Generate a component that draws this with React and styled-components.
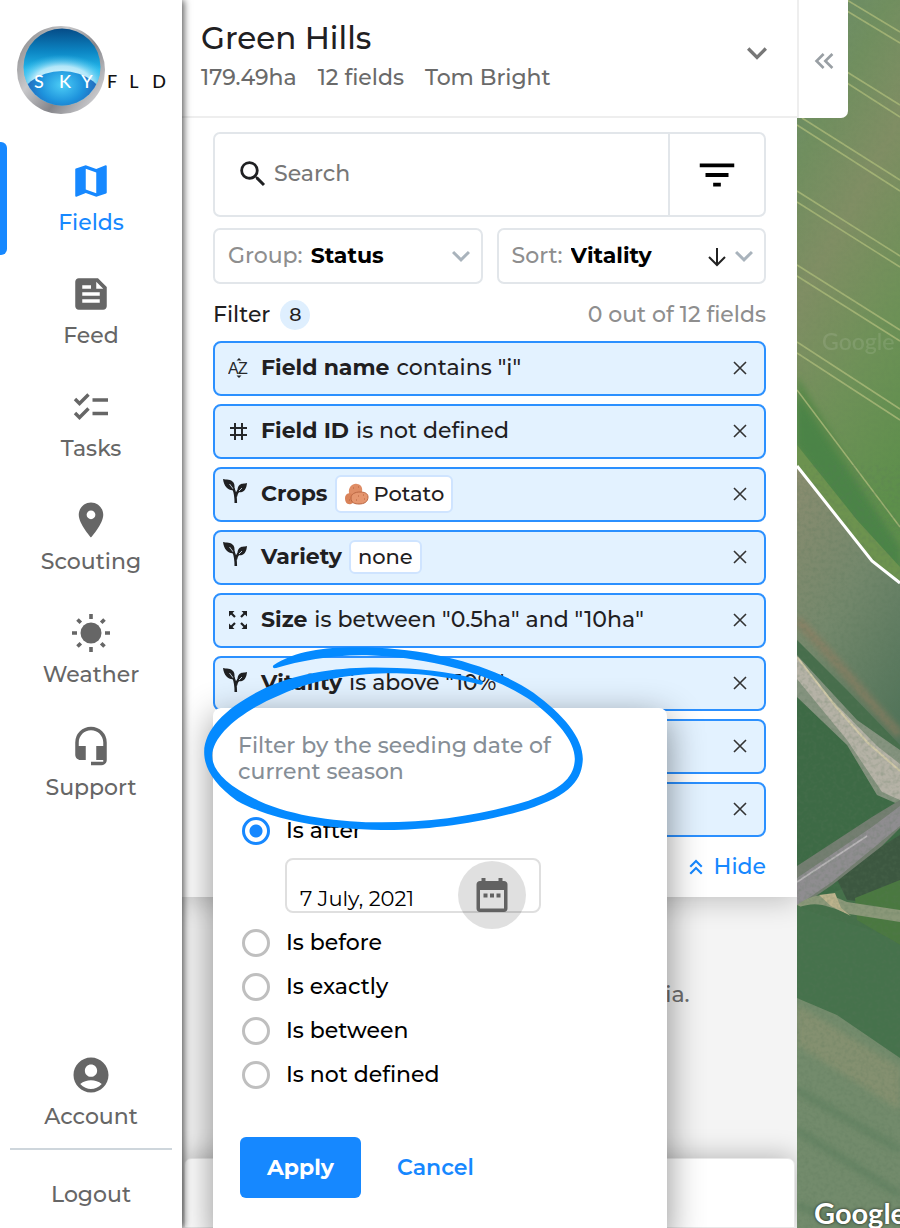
import React, { useState } from 'react';
import styled, { createGlobalStyle } from 'styled-components';
import {
  MdMap,
  MdFeed,
  MdPlace,
  MdHeadsetMic,
  MdAccountCircle,
  MdSearch,
  MdFilterList,
  MdExpandMore,
  MdKeyboardDoubleArrowLeft,
  MdKeyboardDoubleArrowUp,
} from 'react-icons/md';

const GlobalStyle = createGlobalStyle`
  * {
    box-sizing: border-box;
  }
  body {
    margin: 0;
    background: #fff;
    color: #1f2022;
    font-family: Montserrat, Inter, "Liberation Sans", sans-serif;
    font-size: 22px;
    font-weight: 500;
    line-height: 28px;
  }
  button, input, select {
    font: inherit;
    color: inherit;
  }
  button {
    padding: 0;
    border: none;
    background: none;
    cursor: pointer;
  }
  a {
    color: inherit;
    text-decoration: none;
  }
  svg {
    display: block;
    flex-shrink: 0;
  }
`;

const Page = styled.div`
  position: relative;
  display: flex;
  min-height: 100vh;
  overflow: hidden;
`;

const Sidebar = styled.aside`
  position: relative;
  z-index: 3;
  display: flex;
  flex-direction: column;
  flex: 0 0 182px;
  background: #fff;
  box-shadow: 2px 0 7px rgba(0, 0, 0, 0.65);
`;

const LogoLink = styled.a`
  height: 142px;
  padding: 24px 0 0 15px;
`;

const Nav = styled.nav`
  display: flex;
  flex-direction: column;
  flex: 1;
`;

const NavItem = styled.a`
  display: flex;
  flex-direction: column;
  align-items: center;
  gap: 7px;
  height: 113px;
  padding: 18px 7px 0 0;
  border-left: 7px solid transparent;
  color: ${({ $active }) => ($active ? '#1688ff' : '#666')};
  position: relative;

  &::before {
    content: '';
    display: ${({ $active }) => ($active ? 'block' : 'none')};
    position: absolute;
    top: 0;
    left: -7px;
    width: 7px;
    height: 100%;
    border-radius: 0 6px 6px 0;
    background: #1688ff;
  }
`;

const AccountItem = styled(NavItem)`
  height: auto;
  padding-top: 0;
  padding-bottom: 17px;
  margin-top: auto;
`;

const LogoutButton = styled.button`
  margin: 0 10px;
  height: 80px;
  padding-top: 12px;
  border-top: 2px solid #ced6dc;
  color: #666;
`;

const Panel = styled.main`
  display: flex;
  flex-direction: column;
  flex: 0 1 615px;
  background: #f4f4f4;
`;

const Header = styled.header`
  position: relative;
  z-index: 2;
  display: flex;
  align-items: center;
  justify-content: space-between;
  padding: 18px 20px 24px 19px;
  border-bottom: 2px solid #eee;
  background: #fff;
`;

const Title = styled.h1`
  margin: 0 0 6px;
  font-size: 31px;
  font-weight: 500;
  line-height: 40px;
`;

const Meta = styled.div`
  display: flex;
  gap: 21px;
  color: #6a6a6a;
`;

const IconButton = styled.button`
  display: flex;
  align-items: center;
  justify-content: center;
  color: ${({ $color }) => $color || 'inherit'};
`;

const ExpandButton = styled(IconButton)`
  padding-bottom: 4px;
`;

const Filters = styled.section`
  position: relative;
  z-index: 1;
  padding: 14px 31px 16px;
  background: #fff;
  box-shadow: 0 4px 26px rgba(0, 0, 0, 0.22);
`;

const SearchBox = styled.div`
  display: flex;
  height: 85px;
  border: 2px solid #e2e6ea;
  border-radius: 7px;
`;

const SearchField = styled.label`
  display: flex;
  align-items: center;
  gap: 4px;
  flex: 1;
  min-width: 0;
  padding: 0 0 2px 21px;
`;

const SearchInput = styled.input`
  flex: 1;
  min-width: 0;
  border: none;
  outline: none;
  background: none;
  padding: 0;

  &::placeholder {
    color: #777;
    opacity: 1;
  }
`;

const FilterToggle = styled(IconButton)`
  width: 96px;
  border-left: 2px solid #e2e6ea;
  color: #000;
`;

const Selects = styled.div`
  display: grid;
  grid-template-columns: 1fr 1fr;
  gap: 14px;
  margin-top: 11px;
`;

const SelectBox = styled.div`
  display: flex;
  align-items: center;
  height: 56px;
  padding: 0 2px 0 13px;
  border: 2px solid #e2e6ea;
  border-radius: 7px;
`;

const SelectLabel = styled.label`
  color: #8e8e8e;
`;

const Select = styled.select`
  appearance: none;
  flex: 1;
  min-width: 0;
  margin-left: 8px;
  padding: 0;
  border: none;
  outline: none;
  background: none;
  color: #000;
  font-weight: 700;
`;

const Summary = styled.div`
  display: flex;
  align-items: center;
  height: 30px;
  margin: 16px 0 11px;
`;

const Count = styled.span`
  min-width: 30px;
  margin: 0 auto 0 10px;
  border-radius: 15px;
  background: #dfeffe;
  font-size: 19px;
  line-height: 30px;
  text-align: center;
`;

const Muted = styled.span`
  color: #8e8e8e;
`;

const FilterList = styled.ul`
  display: grid;
  gap: 8px;
  margin: 0;
  padding: 0;
  list-style: none;
`;

const FilterItem = styled.li`
  position: relative;
`;

const FilterRow = styled.div`
  display: flex;
  align-items: center;
  gap: 8px;
  height: 55px;
  padding: 0 16px 1px 8px;
  border: 2px solid #2b90ff;
  border-radius: 8px;
  background: #e3f2ff;
  white-space: nowrap;
`;

const RowIcon = styled.span`
  display: flex;
  width: 30px;
  padding-left: ${({ $wide }) => ($wide ? '0' : '5px')};
  padding-bottom: ${({ $wide }) => ($wide ? '6px' : '0')};
`;

const RowText = styled.span`
  display: flex;
  align-items: center;
  gap: 7px;
  padding-bottom: 1px;
`;

const Chip = styled.span`
  display: flex;
  align-items: center;
  gap: 5px;
  height: ${({ $tall }) => ($tall ? '38px' : '34px')};
  padding: 0 7px;
  border: 2px solid #cfe4ff;
  border-radius: 6px;
  background: #fff;
  font-size: 21px;
`;

const RemoveButton = styled(IconButton)`
  margin-left: auto;
`;

const HideButton = styled.button`
  display: flex;
  align-items: center;
  gap: 5px;
  margin: 16px 0 0 auto;
  color: #1688ff;
`;

const Results = styled.div`
  flex: 1;
  padding-top: 84px;
  color: #6f6f6f;
  text-align: center;
`;

const BottomCard = styled.div`
  height: 70px;
  margin: 0 2px;
  border: 1px solid #e8e8e8;
  border-radius: 7px 7px 0 0;
  background: #fff;
  box-shadow: 0 -2px 26px rgba(0, 0, 0, 0.25);
`;

const Popup = styled.form`
  position: absolute;
  z-index: 5;
  top: -11px;
  left: 0;
  width: 454px;
  padding: 25px 25px 40px;
  border-radius: 8px;
  background: #fff;
  box-shadow: 0 10px 36px rgba(0, 0, 0, 0.45);
`;

const PopupTitle = styled.p`
  margin: 0 0 32px;
  max-width: 340px;
  color: #868e96;
  line-height: 26px;
`;

const Options = styled.div`
  display: grid;
  gap: 16px;
`;

const Option = styled.label`
  display: flex;
  align-items: center;
  gap: 16px;
  padding-left: 4px;
  color: #000;
`;

const Radio = styled.input`
  appearance: none;
  width: 28px;
  height: 28px;
  margin: 0;
  border: 3px solid #bfbfbf;
  border-radius: 50%;
  background: #fff;

  &:checked {
    border-color: #1688ff;
    background: radial-gradient(circle, #1688ff 6px, #fff 7px);
  }
`;

const DateField = styled.div`
  position: relative;
  display: flex;
  width: 256px;
  height: 55px;
  margin: -3px 0 0 47px;
`;

const DateInput = styled.input`
  width: 100%;
  padding: 26px 90px 0 13px;
  border: 2px solid #dfdfdf;
  border-radius: 8px;
  color: #000;
  font-size: 21px;
  font-weight: 400;
`;

const CalendarButton = styled(IconButton)`
  position: absolute;
  top: 3px;
  right: 15px;
  width: 68px;
  height: 68px;
  border-radius: 50%;
  background: rgba(0, 0, 0, 0.12);
`;

const Actions = styled.div`
  display: flex;
  align-items: center;
  gap: 36px;
  margin-top: 48px;
  padding-left: 2px;
`;

const ApplyButton = styled.button`
  width: 121px;
  height: 61px;
  border-radius: 6px;
  background: #1688ff;
  color: #fff;
  font-weight: 700;
`;

const CancelButton = styled.button`
  color: #1688ff;
  font-weight: 600;
`;

const Ring = styled.svg`
  position: absolute;
  top: -64px;
  left: -13px;
  pointer-events: none;
`;

const MapArea = styled.div`
  position: relative;
  z-index: 2;
  flex: 1;
  min-width: 0;
  overflow: hidden;
  background: #5f8058;
`;

const MapDrawing = styled.svg`
  position: absolute;
  inset: 0;
  width: 100%;
  height: 100%;
`;

const CollapseButton = styled(IconButton)`
  position: absolute;
  top: 0;
  left: 0;
  width: 51px;
  height: 118px;
  border-left: 2px solid #eee;
  border-radius: 0 0 7px 0;
  background: #fff;
  color: #999fa4;
  padding-top: 4px;
`;

const MapBrand = styled.a`
  position: absolute;
  bottom: -3px;
  left: 17px;
  color: #fff;
  font-family: Lato, sans-serif;
  font-size: 29px;
  font-weight: 700;
  line-height: 36px;
  text-shadow: 0 0 3px rgba(0, 0, 0, 0.8);
`;

const Logo = () => (
  <svg width="154" height="92" viewBox="0 0 154 92" aria-label="SKYFLD">
    <defs>
      <linearGradient id="rim" x1="0" y1="0.2" x2="1" y2="0.9">
        <stop offset="0" stopColor="#8d8d8f" />
        <stop offset="0.3" stopColor="#c9c9cb" />
        <stop offset="0.6" stopColor="#85858a" />
        <stop offset="1" stopColor="#e2e2e4" />
      </linearGradient>
      <linearGradient id="sky" x1="0" y1="0" x2="0" y2="1">
        <stop offset="0" stopColor="#04407b" />
        <stop offset="0.3" stopColor="#0c86c4" />
        <stop offset="0.5" stopColor="#24b9ec" />
        <stop offset="1" stopColor="#2fb4ea" />
      </linearGradient>
      <radialGradient id="halo" cx="0.5" cy="0.6" r="0.55">
        <stop offset="0" stopColor="#fff" />
        <stop offset="0.6" stopColor="#d6f3fd" stopOpacity="0.8" />
        <stop offset="1" stopColor="#3ec3f2" stopOpacity="0" />
      </radialGradient>
      <radialGradient id="earth" cx="0.5" cy="0.2" r="0.5">
        <stop offset="0" stopColor="#4ccdf6" />
        <stop offset="0.5" stopColor="#1d92dc" />
        <stop offset="1" stopColor="#2a4ba3" />
      </radialGradient>
      <clipPath id="globe">
        <circle cx="47" cy="43" r="38.500" />
      </clipPath>
    </defs>
    <circle cx="46" cy="46" r="44" fill="url(#rim)" />
    <g clipPath="url(#globe)">
      <rect width="92" height="92" fill="url(#sky)" />
      <ellipse cx="47" cy="54" rx="44" ry="26" fill="url(#halo)" />
      <ellipse cx="47" cy="82" rx="44" ry="35" fill="url(#earth)" />
    </g>
    <g fontFamily="Lato, sans-serif" fontSize="18" textAnchor="middle" fill="#fff">
      <text x="24" y="64">S</text>
      <text x="50" y="64">K</text>
      <text x="72" y="64">Y</text>
      <g fill="#111">
        <text x="97" y="64">F</text>
        <text x="119" y="64">L</text>
        <text x="144" y="64">D</text>
      </g>
    </g>
  </svg>
);

const TasksIcon = () => (
  <svg width="42" height="42" viewBox="0 0 42 42" fill="none" stroke="currentColor" strokeWidth="3.400">
    <path d="M5 13l4.500 4.500 9-9M5 27l4.500 4.500 9-9" />
    <path d="M22.500 14H38M22.500 27.500H38" />
  </svg>
);

const SunIcon = () => (
  <svg width="42" height="42" viewBox="0 0 42 42" stroke="currentColor" strokeWidth="3.600">
    <circle cx="21" cy="21" r="10.500" fill="currentColor" stroke="none" />
    <path d="M21 2v5M21 35v5M2 21h5M35 21h5M7.500 7.500l3.300 3.300M31.200 31.200l3.300 3.300M34.500 7.500l-3.300 3.300M10.800 31.200l-3.300 3.300" />
  </svg>
);

const ArrowDownIcon = () => (
  <svg width="20" height="24" viewBox="0 0 20 24" fill="none" stroke="#222" strokeWidth="2">
    <path d="M11 4v17M3 13l8 8 8-8" />
  </svg>
);

const CloseIcon = () => (
  <svg width="16" height="16" viewBox="0 0 16 16" fill="none" stroke="#333" strokeWidth="1.600">
    <path d="M2 2l12 12M14 2L2 14" />
  </svg>
);

const AlphaIcon = () => (
  <svg width="22" height="22" viewBox="0 0 22 22" fill="#26282a">
    <text x="0" y="17" fontFamily="Liberation Sans" fontSize="16">A</text>
    <text x="10" y="17" fontFamily="Liberation Sans" fontSize="16">Z</text>
    <path d="M8.500 3.500L11 1l2.500 2.500zM8.500 18.500h5L11 21z" />
  </svg>
);

const HashIcon = () => (
  <svg width="20" height="20" viewBox="0 0 20 20" fill="none" stroke="#26282a" strokeWidth="2">
    <path d="M7 2v17M14 2v17M2 7h17M2 14h17" />
  </svg>
);

const SeedlingIcon = () => (
  <svg width="24" height="24" viewBox="0 0 24 24">
    <path d="M0 0c3 1 8 0 10.500 3.500 1.500 2.500.8 4.500 1.300 7.500C6 12.500 1 8 0 0z" fill="#1f2022" />
    <path d="M24 4c-2.500 1-6 0-8 2.500-1.800 2-1.300 4.500-1.800 6.500C20 14.500 23.500 11 24 4z" fill="#1f2022" />
    <path d="M6.500 5l4.500 6M19 9l-4 4" fill="none" stroke="#e3f2ff" strokeWidth="0.800" />
    <path d="M10.300 9.500c1.500 3 2.500 5 2.500 14.500M15.500 11.500c-1.500 2-2.300 3.500-2.700 6" fill="none" stroke="#1f2022" strokeWidth="2.600" />
  </svg>
);

const SizeIcon = () => (
  <svg width="20" height="20" viewBox="0 0 20 20" fill="#1f2022" stroke="#1f2022">
    <path d="M1 1h5.500L1 6.500zM19 1v5.500L13.500 1zM1 19v-5.500L6.500 19zM19 19h-5.500l5.500-5.500z" stroke="none" />
    <path d="M3 3l4 4M17 3l-4 4M3 17l4-4M17 17l-4-4" strokeWidth="2.200" />
  </svg>
);

const PotatoIcon = () => (
  <svg width="25" height="22" viewBox="0 0 25 22">
    <path d="M5 10C4 4 9 0 13 1c4 0 6 4 5 8s-4 7-9 6c-3-1-4-2-4-5z" fill="#df8d66" />
    <path d="M1 15c0-4 4-6 7-4s4 9-1 10c-4 1-6-2-6-6z" fill="#d98259" />
    <path d="M7 15c0-4 4-6 9-6 4 0 8 1 8 5 0 5-4 7-9 7-4 0-8-1-8-6z" fill="#e5966f" stroke="#bb6743" />
    <path d="M9 5h1M14 4h1M14 13h1M19 12h1M20 16h1M5 17h1M12 17h1" stroke="#b8623f" strokeWidth="1" />
  </svg>
);

const CalendarIcon = () => (
  <svg width="32" height="36" viewBox="0 0 32 36">
    <path
      d="M5.500 1h4v3h13V1h4v3H28c2 0 3.500 1.500 3.500 3.500v24c0 2-1.500 3.500-3.500 3.500H4C2 35 .5 33.500.5 31.500v-24C.5 5.500 2 4 4 4h1.500zM4 13v18.500h24V13z"
      fill="#626262"
      fillRule="evenodd"
    />
    <path d="M7.500 16.500h4v4h-4zM14 16.500h4v4h-4zM20.500 16.500h4v4h-4z" fill="#626262" />
  </svg>
);

// stroke with tapering ends, drawn as one closed outline
const HighlightRing = () => (
  <Ring width="387" height="190" viewBox="0 190 1160 570" aria-hidden="true">
    <path
      d="M220 254C290 205 400 197 500 200C700 205 890 260 1000 336C1090 402 1148 470 1148 535C1145 600 1110 650 950 695C800 735 650 750 545 748C350 745 210 715 110 660C40 610 12 560 12 515C12 440 90 372 200 320C330 262 480 257 590 262C690 265 780 280 845 300C850 304 850 310 842 312C760 292 680 280 590 278C480 277 350 292 240 343C130 388 38 460 36 525C36 570 80 615 175 660C280 708 420 725 545 725C700 725 850 702 985 660C1085 625 1122 590 1124 535C1124 480 1070 420 1000 365C880 280 690 230 500 224C400 222 300 240 228 262C218 264 216 258 220 254Z"
      fill="#048aff"
    />
  </Ring>
);

const Satellite = () => (
  <MapDrawing viewBox="0 0 103 1228" preserveAspectRatio="xMinYMin slice" aria-hidden="true">
    <defs>
      <linearGradient id="field" x1="0" y1="0" x2="0.3" y2="1">
        <stop offset="0" stopColor="#6b8c6d" />
        <stop offset="0.25" stopColor="#718f5f" />
        <stop offset="0.45" stopColor="#808e64" />
        <stop offset="0.7" stopColor="#6f9158" />
        <stop offset="1" stopColor="#5d8f4b" />
      </linearGradient>
      <linearGradient id="meadow" x1="0" y1="0" x2="0.5" y2="1">
        <stop offset="0" stopColor="#8b8d70" />
        <stop offset="0.5" stopColor="#74886c" />
        <stop offset="1" stopColor="#52745a" />
      </linearGradient>
      <filter id="grain" x="0" y="0" width="100%" height="100%">
        <feTurbulence type="fractalNoise" baseFrequency="0.25" numOctaves="3" seed="4" />
        <feColorMatrix values="0 0 0 0 0.1  0 0 0 0 0.18  0 0 0 0 0.1  0 1.600 0 0 -0.650" />
      </filter>
      <filter id="soft">
        <feGaussianBlur stdDeviation="3" />
      </filter>
    </defs>
    <rect width="103" height="620" fill="url(#field)" />
    <path d="M0 375L103 545V585L75 562L0 465z" fill="#5b8a4b" filter="url(#soft)" />
    <path d="M0 395L103 548V575L75 550L0 445z" fill="#4b8447" filter="url(#soft)" />
    <path d="M0 445L60 520L103 567V585L75 562L0 465z" fill="#6d934f" />
    <g stroke="#a9b878" strokeWidth="1.500" opacity="0.85">
      <path d="M50 0L103 32M50 11L103 43M50 72L103 105M50 83L103 117M5 118L103 180M0 125L103 191M0 191L103 256M0 202L103 267M0 265L103 330M0 276L103 341M0 342L103 409M0 353L103 420M0 390L103 527" />
    </g>
    <text x="25" y="350" fill="#fff" opacity="0.1" fontFamily="Lato, sans-serif" fontSize="23">Google</text>
    <path d="M0 465L75 562L103 583V800H0z" fill="url(#meadow)" />
    <path d="M0 620C40 660 70 700 103 735" fill="none" stroke="#8f7d62" strokeWidth="9" opacity="0.7" filter="url(#soft)" />
    <path d="M0 640L50 690L103 745V800H0z" fill="#476e4c" />
    <path d="M0 690L103 790V910H0z" fill="#3d6a45" />
    <path d="M0 655L60 720L103 750V805L80 795L50 745L0 697z" fill="#85937f" />
    <path d="M0 658L30 695L80 746L103 764V800L85 792L50 740L0 679z" fill="#b5b2a6" />
    <path d="M0 657L40 708L70 742L103 771" fill="none" stroke="#d1c9a9" strokeWidth="2" />
    <path d="M0 895C40 900 60 880 103 860V1100H0z" fill="#45704a" />
    <path d="M38 875L103 835V905L50 900z" fill="#3c5740" />
    <path d="M58 898L103 880V945L60 920z" fill="#4a7840" />
    <path d="M0 866L75 817L103 800V828L85 846L35 885L0 909z" fill="#747e71" />
    <path d="M0 878L75 827L103 806V826L80 845L35 882L0 906z" fill="#8f8d90" />
    <path d="M0 882L70 836" stroke="#b9b6b8" strokeWidth="1.500" />
    <path d="M0 905C20 890 35 895 50 902L103 910V922L52 914C30 906 20 900 0 908z" fill="#8b9879" />
    <path d="M22 895L38 893L44 908L54 916L34 906z" fill="#bdb38d" />
    <path d="M0 905C40 925 70 922 103 945V1060L40 1015L0 998z" fill="#46724c" />
    <path d="M0 998L40 1015L103 1058V1228H0z" fill="#738b6c" />
    <path d="M0 1005L50 1035L103 1068V1110L40 1070L0 1045z" fill="#84906f" filter="url(#soft)" />
    <path d="M0 1090L103 1150M0 1130L103 1195M0 1205L60 1228" stroke="#587c5b" strokeWidth="7" opacity="0.6" filter="url(#soft)" />
    <rect y="465" width="103" height="763" filter="url(#grain)" opacity="0.35" />
    <rect width="103" height="465" filter="url(#grain)" opacity="0.1" />
    <path d="M0 466L75 561L103 583" fill="none" stroke="#fff" strokeWidth="3" />
  </MapDrawing>
);

const navItems = [
  { label: 'Fields', icon: <MdMap size={42} /> },
  { label: 'Feed', icon: <MdFeed size={42} /> },
  { label: 'Tasks', icon: <TasksIcon /> },
  { label: 'Scouting', icon: <MdPlace size={42} /> },
  { label: 'Weather', icon: <SunIcon /> },
  { label: 'Support', icon: <MdHeadsetMic size={42} /> },
];

const filters = [
  { name: 'Field name', text: 'contains "i"', icon: <AlphaIcon /> },
  { name: 'Field ID', text: 'is not defined', icon: <HashIcon /> },
  { name: 'Crops', chip: 'Potato', chipIcon: <PotatoIcon />, icon: <SeedlingIcon />, wide: true },
  { name: 'Variety', chip: 'none', icon: <SeedlingIcon />, wide: true },
  { name: 'Size', text: 'is between "0.5ha" and "10ha"', icon: <SizeIcon /> },
  { name: 'Vitality', text: 'is above "10%"', icon: <SeedlingIcon />, wide: true },
  { name: 'Seeding date', icon: <SeedlingIcon />, wide: true, popup: true },
  { name: 'Harvest date', icon: <SeedlingIcon />, wide: true },
];

const options = ['Is after', 'Is before', 'Is exactly', 'Is between', 'Is not defined'];

const SeedingPopup = () => {
  const [selected, setSelected] = useState('Is after');
  const [date, setDate] = useState('7 July, 2021');

  return (
    <Popup onSubmit={(e) => e.preventDefault()}>
      <PopupTitle>Filter by the seeding date of current season</PopupTitle>
      <Options>
        {options.map((option) => (
          <React.Fragment key={option}>
            <Option>
              <Radio
                type="radio"
                name="seeding"
                checked={selected === option}
                onChange={() => setSelected(option)}
              />
              {option}
            </Option>
            {option === 'Is after' && (
              <DateField>
                <DateInput
                  aria-label="Seeding date"
                  value={date}
                  onChange={(e) => setDate(e.target.value)}
                />
                <CalendarButton type="button" aria-label="Open calendar">
                  <CalendarIcon />
                </CalendarButton>
              </DateField>
            )}
          </React.Fragment>
        ))}
      </Options>
      <Actions>
        <ApplyButton type="submit">Apply</ApplyButton>
        <CancelButton type="button">Cancel</CancelButton>
      </Actions>
      <HighlightRing />
    </Popup>
  );
};

const App = () => {
  const [search, setSearch] = useState('');

  return (
    <>
      <GlobalStyle />
      <Page>
        <Sidebar>
          <LogoLink href="#home">
            <Logo />
          </LogoLink>
          <Nav>
            {navItems.map(({ label, icon }) => (
              <NavItem key={label} href={`#${label.toLowerCase()}`} $active={label === 'Fields'}>
                {icon}
                {label}
              </NavItem>
            ))}
            <AccountItem href="#account">
              <MdAccountCircle size={42} />
              Account
            </AccountItem>
          </Nav>
          <LogoutButton>Logout</LogoutButton>
        </Sidebar>

        <Panel>
          <Header>
            <div>
              <Title>Green Hills</Title>
              <Meta>
                <span>179.49ha</span>
                <span>12 fields</span>
                <span>Tom Bright</span>
              </Meta>
            </div>
            <ExpandButton $color="#777" aria-label="Show farms">
              <MdExpandMore size={40} />
            </ExpandButton>
          </Header>

          <Filters>
            <SearchBox>
              <SearchField>
                <MdSearch size={34} />
                <SearchInput
                  aria-label="Search"
                  placeholder="Search"
                  value={search}
                  onChange={(e) => setSearch(e.target.value)}
                />
              </SearchField>
              <FilterToggle aria-label="Filters">
                <MdFilterList size={46} />
              </FilterToggle>
            </SearchBox>

            <Selects>
              <SelectBox>
                <SelectLabel htmlFor="group">Group:</SelectLabel>
                <Select id="group">
                  <option>Status</option>
                </Select>
                <MdExpandMore size={36} color="#a9b3bc" />
              </SelectBox>
              <SelectBox>
                <SelectLabel htmlFor="sort">Sort:</SelectLabel>
                <Select id="sort">
                  <option>Vitality</option>
                </Select>
                <IconButton aria-label="Sort descending">
                  <ArrowDownIcon />
                </IconButton>
                <MdExpandMore size={36} color="#a9b3bc" />
              </SelectBox>
            </Selects>

            <Summary>
              Filter
              <Count>8</Count>
              <Muted>0 out of 12 fields</Muted>
            </Summary>

            <FilterList>
              {filters.map((filter) => (
                <FilterItem key={filter.name}>
                  <FilterRow>
                    <RowIcon $wide={filter.wide}>{filter.icon}</RowIcon>
                    <RowText>
                      <strong>{filter.name}</strong>
                      {filter.text}
                      {filter.chip && (
                        <Chip $tall={Boolean(filter.chipIcon)}>
                          {filter.chipIcon}
                          {filter.chip}
                        </Chip>
                      )}
                    </RowText>
                    <RemoveButton aria-label={`Remove ${filter.name}`}>
                      <CloseIcon />
                    </RemoveButton>
                  </FilterRow>
                  {filter.popup && <SeedingPopup />}
                </FilterItem>
              ))}
            </FilterList>

            <HideButton>
              <MdKeyboardDoubleArrowUp size={26} />
              Hide
            </HideButton>
          </Filters>

          <Results>No fields meet your filtering criteria.</Results>
          <BottomCard />
        </Panel>

        <MapArea>
          <Satellite />
          <CollapseButton aria-label="Collapse panel">
            <MdKeyboardDoubleArrowLeft size={32} />
          </CollapseButton>
          <MapBrand href="#map">Google</MapBrand>
        </MapArea>
      </Page>
    </>
  );
};

export default App;
